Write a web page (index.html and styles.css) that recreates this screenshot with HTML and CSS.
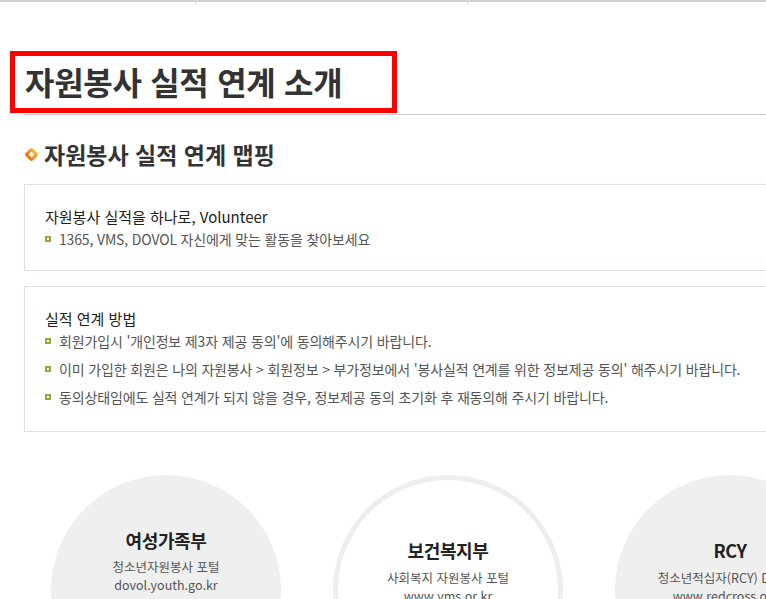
FILE: index.html
```html
<!DOCTYPE html>
<html lang="ko">
<head>
<meta charset="utf-8">
<title>자원봉사 실적 연계 소개</title>
<link rel="stylesheet" href="styles.css">
</head>
<body>
<div class="topbar">
  <div class="tab tab1"></div>
  <div class="tab tab2"></div>
  <div class="tab tab3"></div>
</div>
<div class="main">
  <h1 class="page-title">자원봉사 실적 연계 소개</h1>
  <h2 class="sec-title">
    <svg class="diamond" width="15" height="15" viewBox="0 0 14 14" aria-hidden="true">
      <defs>
        <linearGradient id="og" x1="0" y1="0" x2="0" y2="1">
          <stop offset="0" stop-color="#ffb52e"/>
          <stop offset="1" stop-color="#f36b0c"/>
        </linearGradient>
      </defs>
      <rect x="2.2" y="2.2" width="9.6" height="9.6" rx="2" transform="rotate(45 7 7)" fill="url(#og)"/>
      <rect x="5" y="5" width="4" height="4" rx="0.8" transform="rotate(45 7 7)" fill="#fff"/>
    </svg>
    자원봉사 실적 연계 맵핑
  </h2>
  <div class="box">
    <p class="box-title">자원봉사 실적을 하나로, Volunteer</p>
    <ul class="blist">
      <li>1365, VMS, DOVOL 자신에게 맞는 활동을 찾아보세요</li>
    </ul>
  </div>
  <div class="box box2">
    <p class="box-title">실적 연계 방법</p>
    <ul class="blist spaced">
      <li>회원가입시 '개인정보 제3자 제공 동의'에 동의해주시기 바랍니다.</li>
      <li>이미 가입한 회원은 나의 자원봉사 &gt; 회원정보 &gt; 부가정보에서 '봉사실적 연계를 위한 정보제공 동의' 해주시기 바랍니다.</li>
      <li>동의상태임에도 실적 연계가 되지 않을 경우, 정보제공 동의 초기화 후 재동의해 주시기 바랍니다.</li>
    </ul>
  </div>
  <div class="circles">
    <div class="circle filled first">
      <p class="c-title">여성가족부</p>
      <p class="c-sub">청소년자원봉사 포털<br>dovol.youth.go.kr</p>
    </div>
    <div class="circle outline">
      <p class="c-title">보건복지부</p>
      <p class="c-sub">사회복지 자원봉사 포털<br>www.vms.or.kr</p>
    </div>
    <div class="circle filled third">
      <p class="c-title">RCY</p>
      <p class="c-sub">청소년적십자(RCY) DOVOL<br>www.redcross.or.kr</p>
    </div>
  </div>
</div>
<div class="highlight"></div>
</body>
</html>
```
FILE: styles.css
```css
html, body {
  margin: 0;
  padding: 0;
}
body {
  width: 766px;
  height: 599px;
  overflow: hidden;
  background: #fff;
  font-family: "Noto Sans CJK KR", "Noto Sans", sans-serif;
  color: #333;
  position: relative;
}
.topbar {
  display: flex;
  border-top: 2px solid #d2d2d2;
  height: 2px;
}
.tab {
  height: 2px;
  border-right: 1px solid #d2d2d2;
}
.tab1 { width: 195px; }
.tab2 { width: 271px; }
.tab3 { flex: 1; border-right: 0; }

.main {
  margin-left: 24px;
  width: 800px;
}
.page-title {
  margin: 57px 0 0;
  padding: 0 0 13px 1px;
  font-size: 32px;
  line-height: 40px;
  font-weight: 700;
  letter-spacing: -0.3px;
  color: #333;
  border-bottom: 1px solid #cfcfcf;
}
.sec-title {
  margin: 24px 0 0;
  display: flex;
  align-items: center;
  gap: 5px;
  font-size: 23px;
  line-height: 30px;
  font-weight: 700;
  color: #333;
  letter-spacing: 0;
}
.diamond {
  flex: none;
  margin-top: 1px;
}
.box {
  margin-top: 15px;
  border: 1px solid #dcdfe6;
  padding: 21px 20px 20px;
}
.box2 {
  margin-top: 15px;
  padding-bottom: 23px;
}
.box-title {
  margin: 0;
  font-size: 15px;
  line-height: 22px;
  color: #222;
}
.blist {
  list-style: none;
  margin: 0;
  padding: 0;
}
.blist li {
  position: relative;
  padding-left: 14px;
  font-size: 14px;
  line-height: 22px;
  letter-spacing: -0.15px;
  color: #555;
}
.blist li::before {
  content: "";
  position: absolute;
  left: 0;
  top: 8px;
  width: 2px;
  height: 2px;
  border: 2px solid #98a942;
  background: #fdfdf0;
}
.blist.spaced li + li {
  margin-top: 6px;
}
.circles {
  margin-top: 43px;
  padding-left: 27px;
  display: flex;
  gap: 52px;
}
.circle {
  flex: none;
  width: 230px;
  height: 230px;
  border-radius: 50%;
  box-sizing: border-box;
  text-align: center;
}
.filled {
  background: #efefef;
  padding-top: 58px;
}
.filled.first {
  padding-top: 53px;
}
.outline {
  background: #fff;
  border: 5px solid #eeeeee;
  padding-top: 58px;
}
.filled.third {
  padding-top: 63px;
}
.c-title {
  margin: 0;
  font-size: 18px;
  line-height: 24px;
  font-weight: 700;
  color: #222;
  letter-spacing: -0.4px;
}
.c-sub {
  margin: 6px 0 0;
  font-size: 12.5px;
  line-height: 18px;
  color: #555;
}
.outline .c-sub, .third .c-sub {
  margin-top: 7px;
}
.highlight {
  position: absolute;
  left: 10px;
  top: 51px;
  width: 377px;
  height: 52px;
  border: 5px solid #ff0000;
}
```
